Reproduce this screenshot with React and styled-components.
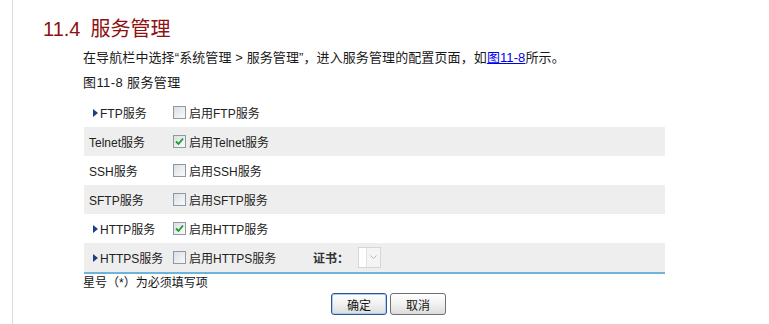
import React from "react";
import styled, { createGlobalStyle } from "styled-components";

const Global = createGlobalStyle`
  html, body { margin: 0; padding: 0; background: #fff; }
  body { font-family: "Liberation Sans", Arial, "Noto Sans CJK SC", sans-serif; }
`;

const Page = styled.div`
  padding-left: 12px;
  height: 324px;
  overflow: hidden;
`;

const Article = styled.div`
  border-left: 1px solid #dcdcdc;
  height: 324px;
  padding-left: 30px;
  box-sizing: border-box;
`;

const Heading = styled.h2`
  margin: 0;
  padding-top: 16px;
  font-size: 20px;
  line-height: 26px;
  font-weight: normal;
  color: #8e1010;
  font-family: "Liberation Sans", Arial, "Noto Sans CJK SC", sans-serif;
  display: flex;
  gap: 10px;
`;

const Body = styled.div`
  padding-left: 40px;
`;

const Para = styled.p`
  margin: 6px 0 0;
  font-size: 13px;
  line-height: 20px;
  letter-spacing: 0.1px;
  color: #1a1a1a;
  font-family: "Liberation Sans", Arial, "Noto Sans CJK SC", sans-serif;
`;

const Link = styled.a`
  color: #0000ee;
  text-decoration: underline;
`;

const Caption = styled.div`
  margin-top: 5px;
  font-size: 13px;
  line-height: 20px;
  letter-spacing: 0.4px;
  color: #1a1a1a;
`;

const Table = styled.div`
  margin-top: 5px;
  margin-left: 1px;
  width: 581px;
  border-bottom: 2px solid #6cb4d9;
  font-size: 12px;
  color: #222;
  font-family: "Liberation Sans", Arial, "Noto Sans CJK SC", sans-serif;
`;

const Row = styled.div`
  display: flex;
  align-items: center;
  height: 29px;
  background: ${(p) => (p.$shade ? "#eeeeee" : "#ffffff")};
`;

const Label = styled.div`
  width: 89px;
  box-sizing: border-box;
  padding-left: ${(p) => (p.$arrow ? "9px" : "5px")};
  display: flex;
  align-items: center;
  gap: 2px;
  flex-shrink: 0;
`;

const Arrow = styled.span`
  width: 0;
  height: 0;
  border-top: 4.5px solid transparent;
  border-bottom: 4.5px solid transparent;
  border-left: 5px solid #1d3f86;
`;

const Check = styled.label`
  display: flex;
  align-items: center;
  gap: 3px;
  width: ${(p) => p.$w || "auto"};
`;

const Box = styled.span`
  width: 11px;
  height: 11px;
  border: 1px solid #8c9aa8;
  background: linear-gradient(135deg, #dcdfe3, #fafafa);
  display: inline-flex;
  align-items: center;
  justify-content: center;
`;

const CertLabel = styled.span`
  margin-left: 5px;
  font-weight: bold;
  color: #333;
`;

const Select = styled.span`
  margin-left: 9px;
  width: 21px;
  height: 19px;
  border: 1px solid #d6d6d6;
  background: #fff;
  display: inline-flex;
  justify-content: flex-end;
  align-items: stretch;
`;

const SelectBtn = styled.span`
  width: 13px;
  border-left: 1px solid #e2e2e2;
  background: #f4f4f4;
  display: flex;
  align-items: center;
  justify-content: center;
`;

const Note = styled.div`
  margin-top: 1px;
  font-size: 12px;
  line-height: 16px;
  color: #111;
`;

const Buttons = styled.div`
  display: flex;
  gap: 3px;
  margin-top: 2px;
  padding-left: 248px;
`;

const Button = styled.button`
  width: 56px;
  height: 22px;
  padding: 0;
  font-size: 12px;
  font-family: "Liberation Sans", Arial, "Noto Sans CJK SC", sans-serif;
  color: #111;
  border: 1px solid ${(p) => (p.$primary ? "#2a5596" : "#707070")};
  border-radius: 3px;
  background: linear-gradient(#ffffff, #f1f1f1 50%, #dcdcdc);
  box-shadow: ${(p) => (p.$primary ? "inset 0 0 0 1px #a9cdf0" : "none")};
`;

function CheckBox({ checked }) {
  return (
    <Box>
      {checked && (
        <svg width="9" height="9" viewBox="0 0 9 9">
          <path d="M1 4.5 L3.5 7 L8 1.5" fill="none" stroke="#1f9a2e" strokeWidth="1.8" />
        </svg>
      )}
    </Box>
  );
}

const rows = [
  { label: "FTP服务", arrow: true, text: "启用FTP服务", checked: false },
  { label: "Telnet服务", text: "启用Telnet服务", checked: true },
  { label: "SSH服务", text: "启用SSH服务", checked: false },
  { label: "SFTP服务", text: "启用SFTP服务", checked: false },
  { label: "HTTP服务", arrow: true, text: "启用HTTP服务", checked: true },
  { label: "HTTPS服务", arrow: true, text: "启用HTTPS服务", checked: false, cert: true },
];

export default function App() {
  return (
    <>
      <Global />
      <Page>
        <Article>
          <Heading>
            <span>11.4</span>
            <span>服务管理</span>
          </Heading>
          <Body>
            <Para>
              在导航栏中选择“系统管理 &gt; 服务管理”，进入服务管理的配置页面，如<Link href="#">图11-8</Link>所示。
            </Para>
            <Caption>图11-8 服务管理</Caption>
            <Table>
              {rows.map((r, i) => (
                <Row key={r.label} $shade={i % 2 === 1}>
                  <Label $arrow={r.arrow}>
                    {r.arrow && <Arrow />}
                    <span>{r.label}</span>
                  </Label>
                  <Check $w={r.cert ? "135px" : "auto"}>
                    <CheckBox checked={r.checked} />
                    <span>{r.text}</span>
                  </Check>
                  {r.cert && (
                    <>
                      <CertLabel>证书：</CertLabel>
                      <Select>
                        <SelectBtn>
                          <svg width="7" height="5" viewBox="0 0 7 5">
                            <path d="M0.5 0.5 L3.5 3.5 L6.5 0.5" fill="none" stroke="#b8b8b8" strokeWidth="1" />
                          </svg>
                        </SelectBtn>
                      </Select>
                    </>
                  )}
                </Row>
              ))}
            </Table>
            <Note>星号（*）为必须填写项</Note>
            <Buttons>
              <Button $primary>确定</Button>
              <Button>取消</Button>
            </Buttons>
          </Body>
        </Article>
      </Page>
    </>
  );
}
